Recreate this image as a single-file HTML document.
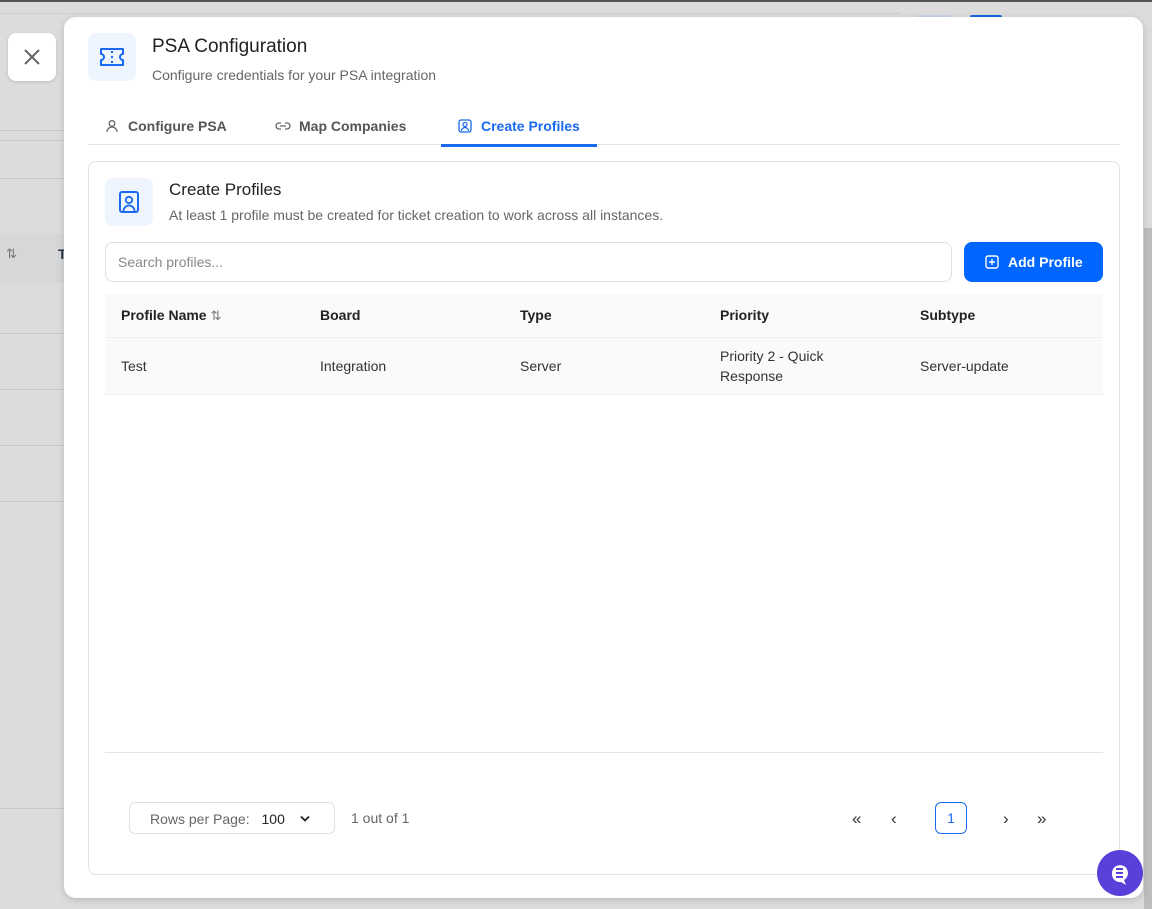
<!DOCTYPE html>
<html><head><style>
*{box-sizing:border-box;margin:0;padding:0}
body{width:1152px;height:909px;overflow:hidden;background:#dcdcdc;font-family:"Liberation Sans",sans-serif;position:relative;color:#1f2937}
.a{position:absolute}
.ln{position:absolute;left:0;width:64px;height:1px;background:#c9c9c9}
.modal{left:64px;top:17px;width:1079px;height:881px;background:#fff;border-radius:12px;box-shadow:0 2px 8px rgba(0,0,0,.15)}
.th{position:absolute;top:290px;font-size:14px;font-weight:bold;color:#222}
.td{position:absolute;font-size:14px;color:#333}
</style></head><body>
<div class="a" style="left:0;top:0;width:1152px;height:2px;background:#555"></div>
<div class="a" style="left:0;top:13px;width:900px;height:1px;background:#cfcfcf"></div>
<div class="a" style="left:917px;top:15px;width:34px;height:4px;background:#c6d3e6;border-radius:4px"></div>
<div class="a" style="left:970px;top:15px;width:32px;height:4px;background:#1a66e0;border-radius:4px"></div>
<div class="ln" style="top:130px"></div><div class="ln" style="top:140px"></div><div class="ln" style="top:178px"></div>
<div class="a" style="left:0;top:233px;width:64px;height:50px;background:#d6d7d9"></div>
<div class="a" style="left:6px;top:246px;font-size:13px;color:#777">⇅</div>
<div class="a" style="left:58px;top:246px;font-size:14px;font-weight:bold;color:#234">T</div>
<div class="ln" style="top:333px"></div><div class="ln" style="top:389px"></div><div class="ln" style="top:445px"></div><div class="ln" style="top:501px"></div><div class="ln" style="top:808px"></div>
<div class="a" style="left:1144px;top:228px;width:8px;height:681px;background:#bdbdbd"></div>
<div class="a" style="left:8px;top:33px;width:48px;height:48px;background:#fff;border-radius:8px;box-shadow:0 1px 3px rgba(0,0,0,.15)">
<svg width="48" height="48"><path d="M17 17L31 31M31 17L17 31" stroke="#666" stroke-width="2"/></svg></div>
<div class="a modal">
 <div class="a" style="left:24px;top:16px;width:48px;height:48px;background:#eef5ff;border-radius:8px">
 <svg width="48" height="48" viewBox="0 0 48 48"><path d="M13 16h22v5a3 3 0 0 0 0 6v5H13v-5a3 3 0 0 0 0-6z" fill="none" stroke="#1a6af0" stroke-width="2" stroke-linejoin="round"/><path d="M24 18v2M24 23v2M24 28v2" stroke="#1a6af0" stroke-width="2"/></svg></div>
 <div class="a" style="left:88px;top:19px;font-size:19px;color:#222">PSA Configuration</div>
 <div class="a" style="left:88px;top:50px;font-size:14px;color:#666">Configure credentials for your PSA integration</div>
 <div class="a" style="left:24px;top:127px;width:1032px;height:1px;background:#e3e3e3"></div>
 <svg class="a" style="left:41px;top:102px" width="14" height="14"><circle cx="7" cy="4.5" r="2.8" fill="none" stroke="#666" stroke-width="1.3"/><path d="M2 13a5 5 0 0 1 10 0" fill="none" stroke="#666" stroke-width="1.3"/></svg>
 <div class="a" style="left:64px;top:101px;font-size:14px;font-weight:bold;color:#555">Configure PSA</div>
 <svg class="a" style="left:211px;top:103px" width="16" height="12"><path d="M6 3H4a3 3 0 0 0 0 6h2M10 3h2a3 3 0 0 1 0 6h-2M5 6h6" fill="none" stroke="#666" stroke-width="1.3"/></svg>
 <div class="a" style="left:235px;top:101px;font-size:14px;font-weight:bold;color:#555">Map Companies</div>
 <svg class="a" style="left:394px;top:102px" width="14" height="14"><rect x="1" y="1" width="12" height="12" rx="2" fill="none" stroke="#1a6af0" stroke-width="1.3"/><circle cx="7" cy="5.5" r="2" fill="none" stroke="#1a6af0" stroke-width="1.2"/><path d="M3.5 12a3.5 3.5 0 0 1 7 0" fill="none" stroke="#1a6af0" stroke-width="1.2"/></svg>
 <div class="a" style="left:417px;top:101px;font-size:14px;font-weight:bold;color:#1a6af0">Create Profiles</div>
 <div class="a" style="left:377px;top:127px;width:156px;height:3px;background:#1a6af0"></div>
 <div class="a" style="left:24px;top:144px;width:1032px;height:714px;border:1px solid #e3e3e3;border-radius:8px">
  <div class="a" style="left:16px;top:16px;width:48px;height:48px;background:#eef5ff;border-radius:8px">
  <svg width="48" height="48"><rect x="15" y="14" width="18" height="20" rx="2" fill="none" stroke="#1a6af0" stroke-width="2"/><circle cx="24" cy="22" r="3.2" fill="none" stroke="#1a6af0" stroke-width="1.8"/><path d="M18.5 33a5.5 5.5 0 0 1 11 0" fill="none" stroke="#1a6af0" stroke-width="1.8"/></svg></div>
  <div class="a" style="left:80px;top:18px;font-size:17px;color:#222">Create Profiles</div>
  <div class="a" style="left:80px;top:45px;font-size:14px;color:#666">At least 1 profile must be created for ticket creation to work across all instances.</div>
  <div class="a" style="left:16px;top:80px;width:847px;height:40px;border:1px solid #e0e0e0;border-radius:8px;font-size:14px;color:#888;padding:11px 12px">Search profiles...</div>
  <div class="a" style="left:875px;top:80px;width:139px;height:40px;background:#0066ff;border-radius:8px;color:#fff;font-size:14px;font-weight:bold">
   <svg class="a" style="left:21px;top:13px" width="14" height="14"><rect x="1" y="1" width="12" height="12" rx="2" fill="none" stroke="#fff" stroke-width="1.4"/><path d="M7 4v6M4 7h6" stroke="#fff" stroke-width="1.4"/></svg>
   <span class="a" style="left:44px;top:12px">Add Profile</span></div>
  <div class="a" style="left:16px;top:132px;width:998px;height:100px;background:#f9fafb"></div>
  <div class="a" style="left:16px;top:175px;width:998px;height:1px;background:#eef0f2"></div>
  <div class="a" style="left:16px;top:232px;width:998px;height:1px;background:#eef0f2"></div>
 </div>
 <div class="th" style="left:57px">Profile Name <span style="font-weight:normal;color:#777;font-size:13px">⇅</span></div>
 <div class="th" style="left:256px">Board</div><div class="th" style="left:456px">Type</div><div class="th" style="left:656px">Priority</div><div class="th" style="left:856px">Subtype</div>
 <div class="td" style="left:57px;top:341px">Test</div>
 <div class="td" style="left:256px;top:341px">Integration</div>
 <div class="td" style="left:456px;top:341px">Server</div>
 <div class="td" style="left:656px;top:329px;line-height:20px">Priority 2 - Quick<br>Response</div>
 <div class="td" style="left:856px;top:341px">Server-update</div>
 <div class="a" style="left:41px;top:735px;width:998px;height:1px;background:#e3e3e3"></div>
 <div class="a" style="left:65px;top:785px;width:206px;height:32px;border:1px solid #e0e0e0;border-radius:6px;font-size:14px;color:#666;padding:8px 20px">Rows per Page: <span style="color:#222;margin-left:8px">100</span>
  <svg class="a" style="left:170px;top:12px" width="10" height="8"><path d="M1 1.5l4 4 4-4" fill="none" stroke="#222" stroke-width="1.8"/></svg></div>
 <div class="a" style="left:287px;top:793px;font-size:14px;color:#666">1 out of 1</div>
 <div class="a" style="left:788px;top:792px;font-size:17px;color:#333">«</div>
 <div class="a" style="left:827px;top:792px;font-size:17px;color:#333">‹</div>
 <div class="a" style="left:871px;top:785px;width:32px;height:32px;border:1px solid #1a6af0;border-radius:6px;font-size:14px;color:#1a6af0;text-align:center;line-height:30px">1</div>
 <div class="a" style="left:939px;top:792px;font-size:17px;color:#333">›</div>
 <div class="a" style="left:973px;top:792px;font-size:17px;color:#333">»</div>
</div>
<div class="a" style="left:1097px;top:850px;width:46px;height:46px;border-radius:50%;background:#5b3fd9">
 <svg width="46" height="46"><path d="M15 23a8 8 0 1 1 12 7l2 5-5-3a8 8 0 0 1-9-9z" fill="#fff"/><path d="M19 19h7M19 23h7M19 27h7" stroke="#5b3fd9" stroke-width="2"/></svg></div>
</body></html>
